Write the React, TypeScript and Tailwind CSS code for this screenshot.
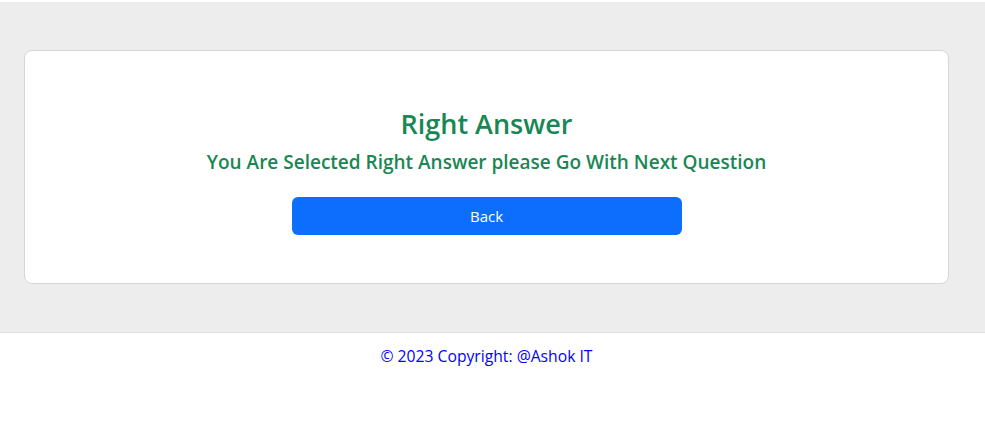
export default function App() {
  return (
    <div className="min-h-[425px] bg-white font-['Open_Sans',sans-serif]">
      <div className="mt-[2px] bg-[#ededed] pt-[48px] pb-[48px] pl-[24px] pr-[36px]">
        <div className="rounded-lg border border-[#d6d6d6] bg-white pt-[56px] pb-[48px] flex flex-col items-center">
          <h3 className="text-[27px] leading-[34px] font-semibold text-[#198754]">
            Right Answer
          </h3>
          <h5 className="mt-[9px] text-[19px] leading-[24px] font-semibold text-[#198754]">
            You Are Selected Right Answer please Go With Next Question
          </h5>
          <button className="mt-[23px] h-[38px] w-[390px] rounded-md bg-[#0d6efd] text-[15px] text-white">
            Back
          </button>
        </div>
      </div>
      <footer className="border-t border-[#dedede] pt-[11px] pr-[12px] text-center text-[15.7px] leading-[24px] text-[#0000ff]">
        © 2023 Copyright: @Ashok IT
      </footer>
    </div>
  );
}
